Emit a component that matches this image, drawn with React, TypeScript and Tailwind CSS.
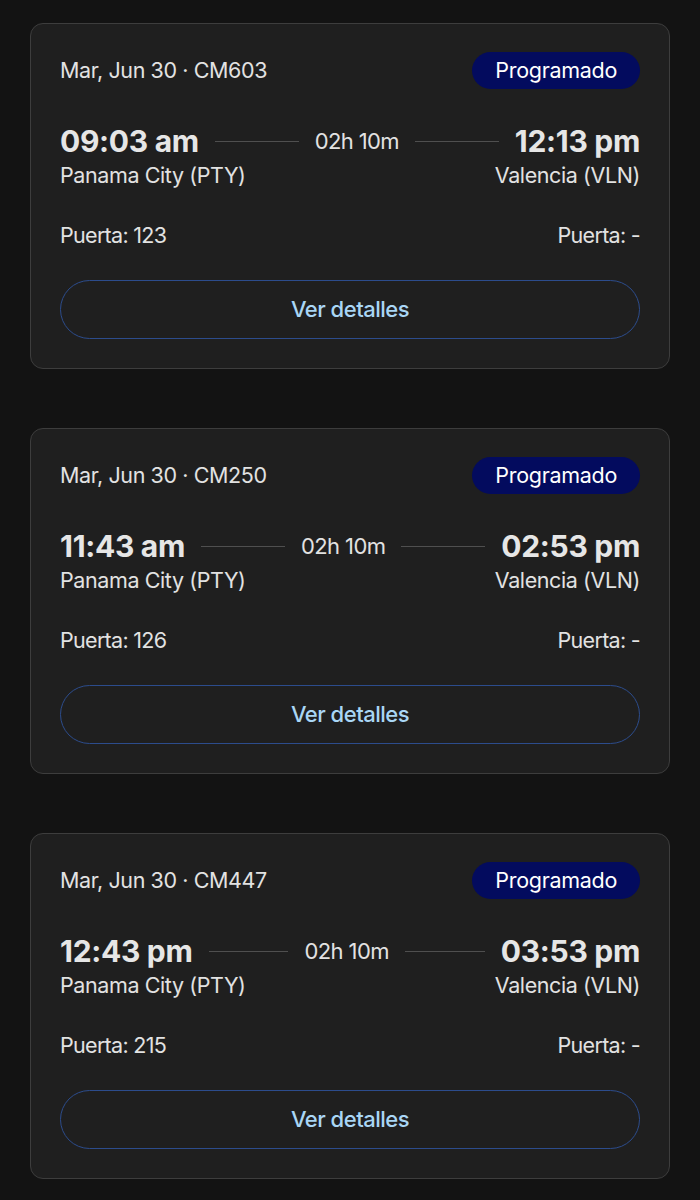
import React from "react";

type Flight = {
  date: string;
  code: string;
  depTime: string;
  arrTime: string;
  gate: string;
};

const flights: Flight[] = [
  { date: "Mar, Jun 30", code: "CM603", depTime: "09:03 am", arrTime: "12:13 pm", gate: "123" },
  { date: "Mar, Jun 30", code: "CM250", depTime: "11:43 am", arrTime: "02:53 pm", gate: "126" },
  { date: "Mar, Jun 30", code: "CM447", depTime: "12:43 pm", arrTime: "03:53 pm", gate: "215" },
];

const FlightCard = ({ flight }: { flight: Flight }) => {
  return (
    <div className="flex flex-col rounded-[13px] border border-[#3d3d3d] bg-[#1f1f1f] px-[29px] pt-[28px] pb-[29px]">
      <div className="flex items-center justify-between">
        <span className="text-[21.5px] tracking-[-0.4px] text-[#e2e2e2]">
          {flight.date} · {flight.code}
        </span>
        <span className="flex h-[37px] items-center rounded-full bg-[#030b5e] px-[23px] text-[21.5px] tracking-[-0.3px] text-white">
          Programado
        </span>
      </div>

      <div className="mt-[34px] flex items-center gap-4">
        <span className="text-[30px] font-bold leading-[36px] tracking-[-0.3px] text-[#e6e6e6]">
          {flight.depTime}
        </span>
        <div className="h-px flex-1 bg-[#4f4f4f]" />
        <span className="text-[22px] tracking-[-0.6px] text-[#e2e2e2]">02h 10m</span>
        <div className="h-px flex-1 bg-[#4f4f4f]" />
        <span className="text-[30px] font-bold leading-[36px] tracking-[-0.3px] text-[#e6e6e6]">
          {flight.arrTime}
        </span>
      </div>
      <div className="mt-[3px] flex justify-between text-[21.5px] leading-[26px] tracking-[-0.4px] text-[#e2e2e2]">
        <span>Panama City (PTY)</span>
        <span>Valencia (VLN)</span>
      </div>

      <div className="mt-[34px] flex justify-between text-[21.5px] leading-[26px] tracking-[-0.7px] text-[#e2e2e2]">
        <span>Puerta: {flight.gate}</span>
        <span>Puerta: -</span>
      </div>

      <button className="mt-[32px] h-[59px] w-full rounded-full border border-[#2c4c8c] text-[22px] font-medium tracking-[-0.5px] text-[#a9d6f5]">
        Ver detalles
      </button>
    </div>
  );
};

export default function App() {
  return (
    <div
      className="flex min-h-[1200px] w-full flex-col gap-[59px] bg-[#131313] px-[30px] pt-[23px] pb-[22px]"
      style={{ fontFamily: "Inter, 'Noto Sans', sans-serif" }}
    >
      {flights.map((f) => (
        <FlightCard key={f.code} flight={f} />
      ))}
    </div>
  );
}
